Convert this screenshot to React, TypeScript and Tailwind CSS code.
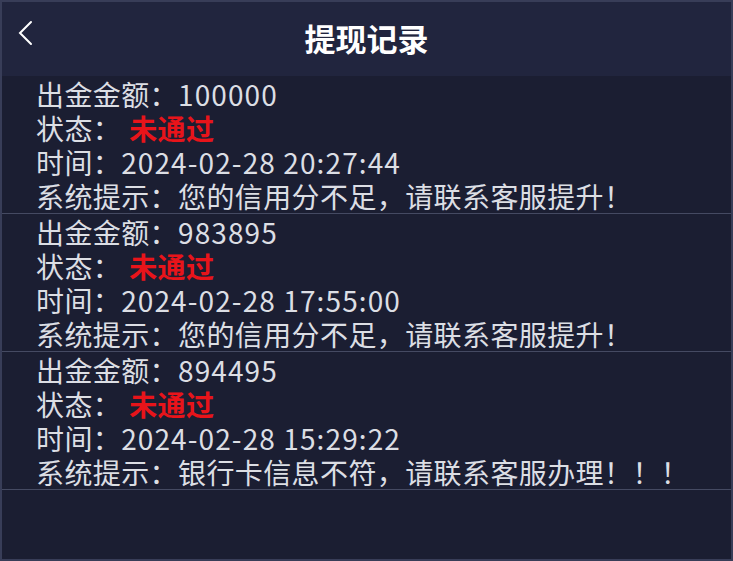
const records = [
  {
    amount: "100000",
    time: "2024-02-28 20:27:44",
    note: "您的信用分不足，请联系客服提升！",
  },
  {
    amount: "983895",
    time: "2024-02-28 17:55:00",
    note: "您的信用分不足，请联系客服提升！",
  },
  {
    amount: "894495",
    time: "2024-02-28 15:29:22",
    note: "银行卡信息不符，请联系客服办理！！！",
  },
];

function RecordItem({ amount, time, note }: { amount: string; time: string; note: string }) {
  return (
    <div className="pt-[1px] pl-[34px] border-b border-[#454a62] text-[28px] leading-[34px] tracking-[0.4px] text-[#dcdee4]">
      <div>
        出金金额：<span className="tracking-[1.1px]">{amount}</span>
      </div>
      <div>
        状态：<span className="ml-[8px] font-bold text-[#e8141a]">未通过</span>
      </div>
      <div>
        时间：<span className="tracking-[1.1px]">{time}</span>
      </div>
      <div>系统提示：{note}</div>
    </div>
  );
}

export default function App() {
  return (
    <div
      className="w-[733px] h-[561px] overflow-hidden border-2 border-[#383d58] bg-[#1b1e32]"
      style={{ fontFamily: '"Noto Sans CJK SC", "Noto Sans", sans-serif' }}
    >
      <div className="relative h-[74px] bg-[#21253e] flex items-center justify-center">
        <svg
          className="absolute left-[15px] top-[18px]"
          width="18"
          height="26"
          viewBox="0 0 18 26"
          fill="none"
          stroke="#ffffff"
          strokeWidth="2"
          strokeLinecap="round"
        >
          <path d="M14 2 L3 13 L14 24" />
        </svg>
        <h1 className="text-[31px] font-bold text-white leading-none -mt-[3px]">提现记录</h1>
      </div>
      {records.map((r, i) => (
        <RecordItem key={i} {...r} />
      ))}
    </div>
  );
}
